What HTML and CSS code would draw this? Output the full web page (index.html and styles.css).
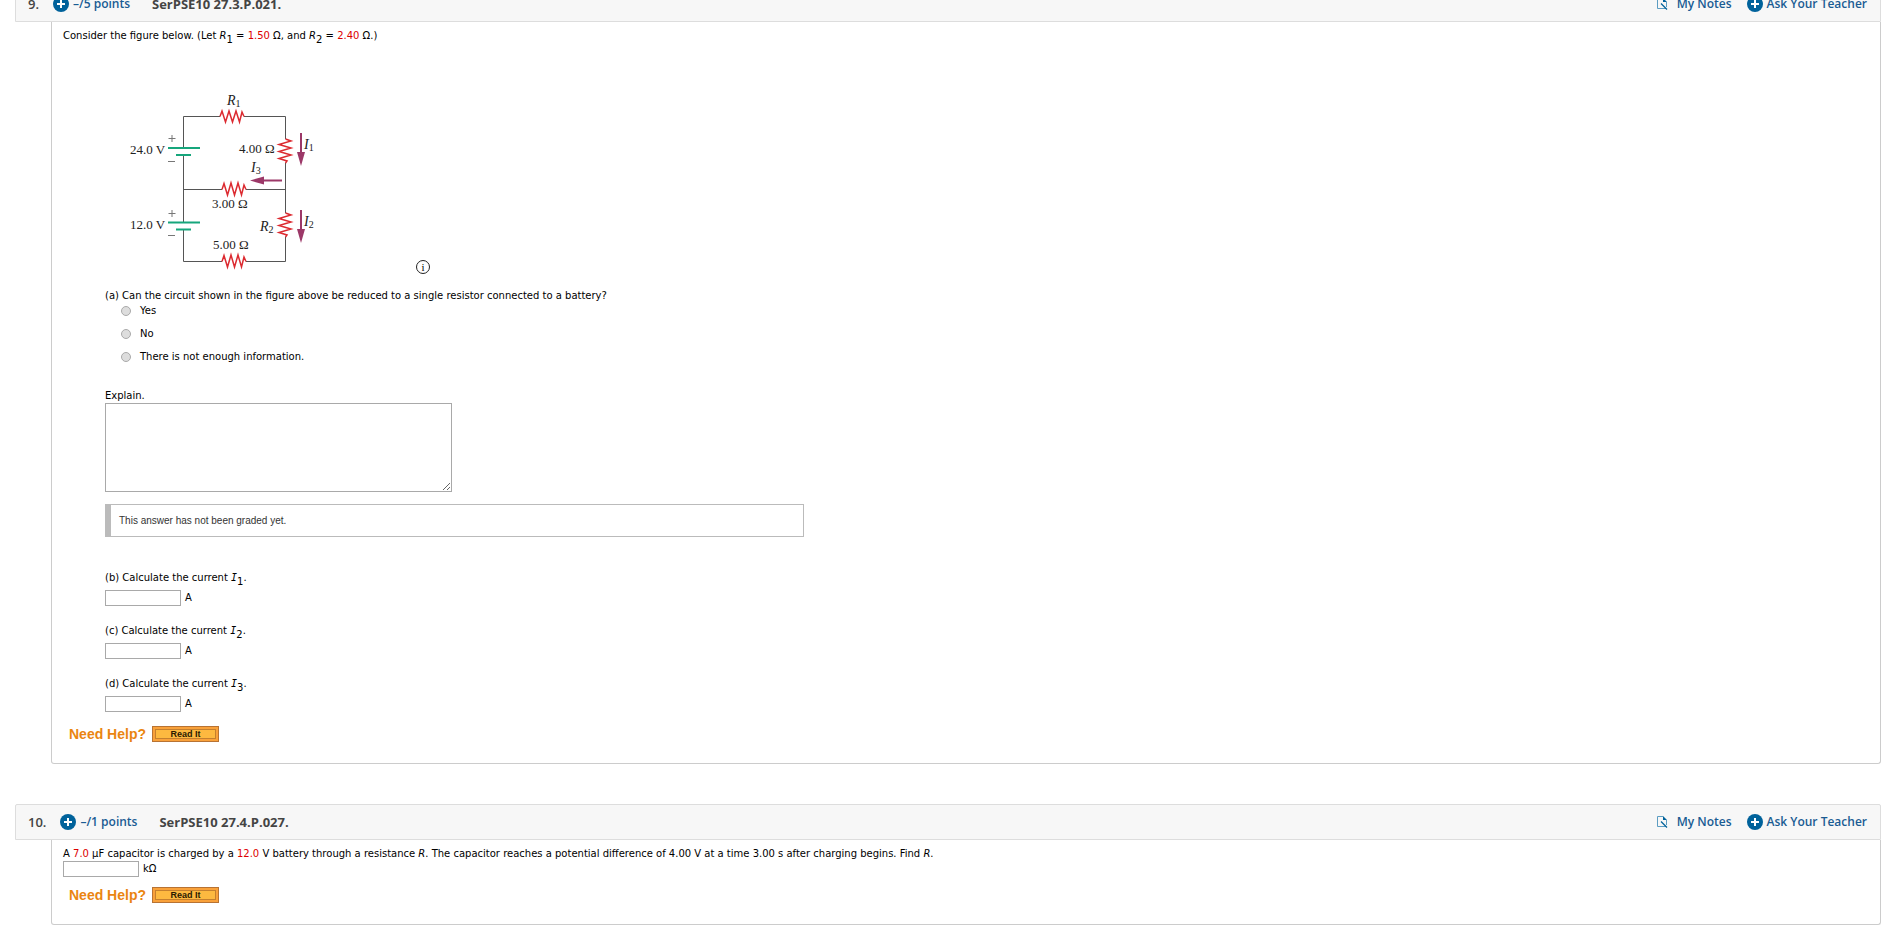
FILE: index.html
```html
<!DOCTYPE html>
<html lang="en">
<head>
<meta charset="utf-8">
<title>Assignment</title>
<link rel="stylesheet" href="styles.css">
</head>
<body>
<svg class="defs" width="0" height="0" aria-hidden="true">
  <symbol id="plus" viewBox="0 0 16 16"><circle cx="8" cy="8" r="8" fill="#00629b"/><path d="M8 4v8M4 8h8" stroke="#fff" stroke-width="2"/></symbol>
  <symbol id="note" viewBox="0 0 11 12"><path d="M6 .5H.5V10.500H9M9.500 4V9" fill="none" stroke="#5c9dc2"/><path d="M6 0l4 4H6z" fill="#00629b"/><path d="M4 5.500L10 11.500" stroke="#00629b" stroke-width="1.300"/></symbol>
</svg>
<main class="page">
  <section class="question">
    <header class="bar">
      <span class="number">9.</span>
      <a class="points" href="#"><svg class="plus"><use href="#plus"/></svg>–/5 points</a>
      <h2 class="title">SerPSE10 27.3.P.021.</h2>
      <nav class="tools">
        <a class="notes" href="#"><svg class="note"><use href="#note"/></svg>My Notes</a>
        <a class="ask" href="#"><svg class="plus"><use href="#plus"/></svg>Ask Your Teacher</a>
      </nav>
    </header>
    <div class="body">
      <p class="text">Consider the figure below. (Let <i>R</i><sub>1</sub> = <span class="value">1.50</span> Ω, and <i>R</i><sub>2</sub> = <span class="value">2.40</span> Ω.)</p>
      <div class="parts">
        <svg class="figure" width="340" height="200" viewBox="0 0 340 200" role="img" aria-label="Circuit with two batteries and five resistors">
          <g class="wire">
            <path d="M73.500 68V36.500H110M134 36.500H175.500V59M175.500 83V133M73.500 76V142M73.500 109.500H112M136 109.500H175.500M175.500 157V181.500H136M112 181.500H73.500V150"/>
          </g>
          <g class="resistor">
            <path d="M110 36.500L112 31l3.500 11L119 31l3.500 11L126 31l3.500 11L132 32l2 4.500"/>
            <path d="M112 109.500l2-6 3.500 11.500L121 103l3.500 12L128 103l3.500 12L134 105l2 4.500"/>
            <path d="M112 181.500l2-6 3.500 11.500L121 175l3.500 12L128 175l3.500 12L134 177l2 4.500"/>
            <path d="M175.500 59L181 61l-12 3.500L181 68l-12 3.500L181 75l-12 3.500 8 2.500-1.500 2"/>
            <path d="M175.500 133L181 135l-12 3.500L181 142l-12 3.500L181 149l-12 3.500 8 2.500-1.500 2"/>
          </g>
          <path class="plate" d="M58 68H90M66 75H81M58 142.500H90M66 149.500H81"/>
          <path class="sign" d="M58.500 58.500h7M62 55v7M58 81.500h7M58.500 133.500h7M62 130v7M58 155.500h7"/>
          <path class="current" d="M191 53V75M191 130V152M172 100.500H150"/>
          <path class="head" d="M187 72h8l-4 14zM187 149h8l-4 14zM154 96.500v8l-14-4z"/>
          <g class="label">
            <text x="20" y="74">24.0 V</text><text x="20" y="149">12.0 V</text>
            <text x="129" y="73">4.00 Ω</text><text x="102" y="128">3.00 Ω</text><text x="103" y="169">5.00 Ω</text>
          </g>
          <g class="symbol">
            <text x="117" y="25">R<tspan class="small" dy="2">1</tspan></text>
            <text x="150" y="151">R<tspan class="small" dy="2">2</tspan></text>
            <text x="194" y="69">I<tspan class="small" dy="2">1</tspan></text>
            <text x="194" y="146">I<tspan class="small" dy="2">2</tspan></text>
            <text x="141" y="92">I<tspan class="small" dy="2">3</tspan></text>
          </g>
          <circle class="info-ring" cx="313" cy="187" r="6.500"/>
          <text class="info" x="313" y="191">i</text>
        </svg>
        <p class="text">(a) Can the circuit shown in the figure above be reduced to a single resistor connected to a battery?</p>
        <div class="choices">
          <label class="choice"><input type="radio" name="a">Yes</label>
          <label class="choice"><input type="radio" name="a">No</label>
          <label class="choice"><input type="radio" name="a">There is not enough information.</label>
        </div>
        <label class="text" for="explain">Explain.</label>
        <textarea class="explain" id="explain"></textarea>
        <div class="notice">This answer has not been graded yet.</div>
        <div class="answers">
          <div><label class="text" for="i1">(b) Calculate the current <i class="current-i">I</i><sub>1</sub>.</label><div class="entry"><input id="i1" type="text">A</div></div>
          <div><label class="text" for="i2">(c) Calculate the current <i class="current-i">I</i><sub>2</sub>.</label><div class="entry"><input id="i2" type="text">A</div></div>
          <div><label class="text" for="i3">(d) Calculate the current <i class="current-i">I</i><sub>3</sub>.</label><div class="entry"><input id="i3" type="text">A</div></div>
        </div>
      </div>
      <div class="help after-parts"><span class="need">Need Help?</span><button class="read" type="button">Read It</button></div>
    </div>
  </section>
  <section class="question">
    <header class="bar">
      <span class="number">10.</span>
      <a class="points" href="#"><svg class="plus"><use href="#plus"/></svg>–/1 points</a>
      <h2 class="title">SerPSE10 27.4.P.027.</h2>
      <nav class="tools">
        <a class="notes" href="#"><svg class="note"><use href="#note"/></svg>My Notes</a>
        <a class="ask" href="#"><svg class="plus"><use href="#plus"/></svg>Ask Your Teacher</a>
      </nav>
    </header>
    <div class="body">
      <label class="text" for="res">A <span class="value">7.0</span> µF capacitor is charged by a <span class="value">12.0</span> V battery through a resistance <i>R</i>. The capacitor reaches a potential difference of 4.00 V at a time 3.00 s after charging begins. Find <i>R</i>.</label>
      <div class="entry tight"><input id="res" type="text">kΩ</div>
      <div class="help"><span class="need">Need Help?</span><button class="read" type="button">Read It</button></div>
    </div>
  </section>
</main>
</body>
</html>
```
FILE: styles.css
```css
* { box-sizing: border-box; }
body { margin: 0; background: #fff; color: #000; font: 10px/14px Verdana, "DejaVu Sans", sans-serif; }
.defs { position: absolute; }
.page { display: flex; flex-direction: column; gap: 40px; margin: -14px 6px 0 15px; }
.bar { display: flex; align-items: center; height: 36px; padding: 0 13px 0 12px; background: #f7f7f7; border: 1px solid #ddd; border-radius: 2px 2px 0 0; font: 600 13px/18px "Open Sans", sans-serif; color: #444; }
.bar a { display: flex; align-items: center; color: #1a5c93; font-size: 12px; text-decoration: none; }
.number { margin-right: 14px; }
.points { gap: 4px; }
.title { margin: 0 0 0 22px; font-size: 13px; font-weight: 700; }
.tools { display: flex; gap: 15px; margin-left: auto; }
.notes { gap: 9px; }
.ask { gap: 4px; }
.plus { width: 16px; height: 16px; }
.note { width: 11px; height: 12px; }
.body { margin-left: 36px; padding: 6px 11px 21px; border: 1px solid #ccc; border-top: 0; border-radius: 0 0 3px 3px; }
.text { display: block; margin: 0; line-height: 15px; }
sub { font-size: 10px; line-height: 0; vertical-align: -4px; }
.value { color: #d00; }
.current-i { font-family: "DejaVu Sans Mono", monospace; line-height: 0; }
.parts { margin-left: 42px; }
.figure { display: block; margin: 37px 0 8px 5px; }
.wire path { fill: none; stroke: #555; }
.resistor path { fill: none; stroke: #dc2a30; stroke-width: 1.5; }
.plate { stroke: #16a67c; stroke-width: 2; }
.sign { stroke: #777; }
.current { stroke: #9c3868; stroke-width: 2; }
.head { fill: #9c3868; }
.label { font: 13px "Liberation Serif", serif; fill: #222; }
.symbol { font: italic 14px "Liberation Serif", serif; fill: #222; }
.small { font-size: 10px; font-style: normal; }
.info-ring { fill: none; stroke: #222; }
.info { font: 11px "Liberation Serif", serif; text-anchor: middle; }
.choices { display: flex; flex-direction: column; gap: 9px; margin: 1px 0 24px 16px; }
.choice { display: flex; align-items: center; gap: 9px; }
.choice input { appearance: none; width: 10px; height: 10px; margin: 0; border: 1px solid #aaa; border-radius: 50%; background: #ddd; }
.explain { display: block; width: 347px; height: 89px; margin: 0 0 12px; border: 1px solid #a9a9a9; }
.notice { max-width: 699px; padding: 9px 8px 8px; border: 1px solid #bbb; border-left-width: 6px; font: 10px/14px "Liberation Sans", sans-serif; color: #333; }
.answers { display: flex; flex-direction: column; gap: 17px; margin-top: 33px; }
.entry { display: flex; align-items: center; gap: 4px; margin-top: 5px; }
.entry input { width: 76px; height: 16px; border: 1px solid #a9a9a9; padding: 0 2px; }
.entry.tight { margin-top: 0; }
.help { display: flex; align-items: center; gap: 6px; margin: 10px 0 0 6px; }
.help.after-parts { margin-top: 14px; }
.need { font: bold 14px/16px "Liberation Sans", sans-serif; color: #ea8511; }
.read { width: 67px; height: 16px; padding: 0; border: 1px solid #b87333; background: #fdb940; box-shadow: inset 0 0 0 2px #f9a13a, inset 0 0 0 3px #c5802e; font: bold 9px/12px "Liberation Sans", sans-serif; color: #2a1a00; }
```
